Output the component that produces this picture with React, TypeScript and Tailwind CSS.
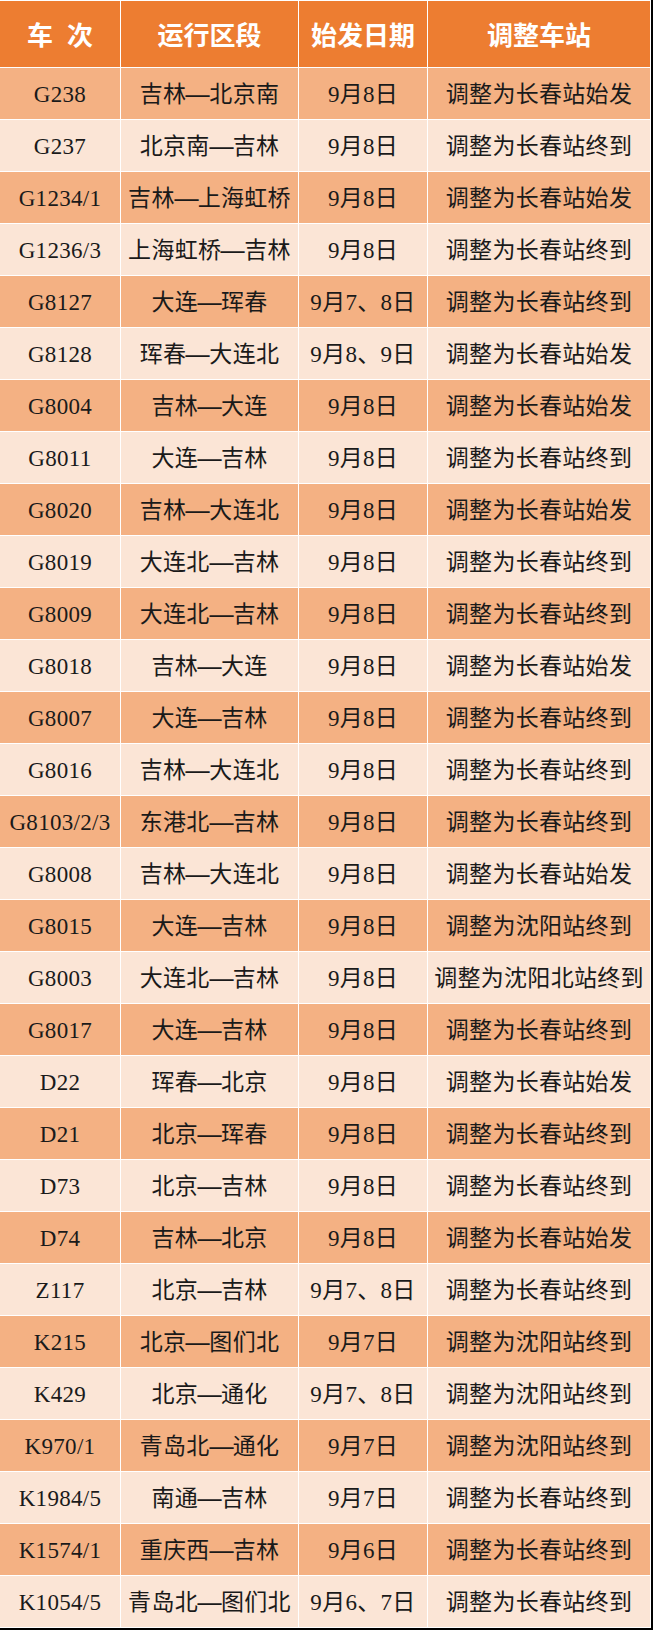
const rows: [string, string, string, string][] = [
  ['G238', '吉林—北京南', '9月8日', '调整为长春站始发'],
  ['G237', '北京南—吉林', '9月8日', '调整为长春站终到'],
  ['G1234/1', '吉林—上海虹桥', '9月8日', '调整为长春站始发'],
  ['G1236/3', '上海虹桥—吉林', '9月8日', '调整为长春站终到'],
  ['G8127', '大连—珲春', '9月7、8日', '调整为长春站终到'],
  ['G8128', '珲春—大连北', '9月8、9日', '调整为长春站始发'],
  ['G8004', '吉林—大连', '9月8日', '调整为长春站始发'],
  ['G8011', '大连—吉林', '9月8日', '调整为长春站终到'],
  ['G8020', '吉林—大连北', '9月8日', '调整为长春站始发'],
  ['G8019', '大连北—吉林', '9月8日', '调整为长春站终到'],
  ['G8009', '大连北—吉林', '9月8日', '调整为长春站终到'],
  ['G8018', '吉林—大连', '9月8日', '调整为长春站始发'],
  ['G8007', '大连—吉林', '9月8日', '调整为长春站终到'],
  ['G8016', '吉林—大连北', '9月8日', '调整为长春站终到'],
  ['G8103/2/3', '东港北—吉林', '9月8日', '调整为长春站终到'],
  ['G8008', '吉林—大连北', '9月8日', '调整为长春站始发'],
  ['G8015', '大连—吉林', '9月8日', '调整为沈阳站终到'],
  ['G8003', '大连北—吉林', '9月8日', '调整为沈阳北站终到'],
  ['G8017', '大连—吉林', '9月8日', '调整为长春站终到'],
  ['D22', '珲春—北京', '9月8日', '调整为长春站始发'],
  ['D21', '北京—珲春', '9月8日', '调整为长春站终到'],
  ['D73', '北京—吉林', '9月8日', '调整为长春站终到'],
  ['D74', '吉林—北京', '9月8日', '调整为长春站始发'],
  ['Z117', '北京—吉林', '9月7、8日', '调整为长春站终到'],
  ['K215', '北京—图们北', '9月7日', '调整为沈阳站终到'],
  ['K429', '北京—通化', '9月7、8日', '调整为沈阳站终到'],
  ['K970/1', '青岛北—通化', '9月7日', '调整为沈阳站终到'],
  ['K1984/5', '南通—吉林', '9月7日', '调整为长春站终到'],
  ['K1574/1', '重庆西—吉林', '9月6日', '调整为长春站终到'],
  ['K1054/5', '青岛北—图们北', '9月6、7日', '调整为长春站终到'],
];

const headers = ['车 次', '运行区段', '始发日期', '调整车站'];

function Cell({ text }: { text: string }) {
  const parts = text.split('—');
  if (parts.length === 1) return <>{text}</>;
  return (
    <>
      {parts[0]}
      <span style={{ fontFamily: '"Noto Sans CJK SC", sans-serif' }} className="inline-block w-[23px] text-center scale-x-[1.15]">一</span>
      {parts[1]}
    </>
  );
}

export default function App() {
  return (
    <div className="w-[653px] h-[1630px] bg-black">
      <div
        className="w-[651px] h-[1628px] bg-white pt-px pr-px pb-px grid gap-px grid-cols-[120px_177px_128px_222px] grid-rows-[66px_repeat(30,minmax(0,1fr))]"
        style={{ fontFamily: '"Liberation Serif", "Noto Sans CJK SC", serif' }}
      >
        {headers.map(h => (
          <div key={h} className="bg-[#ed7d31] flex items-center justify-center pt-[4px] text-white text-[26px] font-bold whitespace-pre">
            {h === '车 次' ? <><span className="mr-[14px]">车</span>次</> : h}
          </div>
        ))}
        {rows.map((r, i) =>
          r.map((c, j) => (
            <div
              key={`${i}-${j}`}
              className={`${i % 2 === 0 ? 'bg-[#f4b183]' : 'bg-[#fbe5d6]'} flex items-center justify-center pt-[4px] text-[23px] text-[#1a1a1a] whitespace-nowrap tracking-[0.3px]`}
            >
              <Cell text={c} />
            </div>
          ))
        )}
      </div>
    </div>
  );
}
